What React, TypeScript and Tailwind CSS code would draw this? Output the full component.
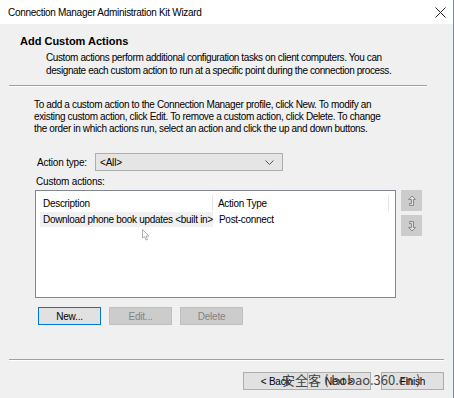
import React from "react";

const font = { fontFamily: '"Liberation Sans", Arial, "Noto Sans CJK SC", sans-serif' };

function Separator({ className }: { className: string }) {
  return (
    <div className={className}>
      <div className="h-px bg-[#a0a0a0]" />
      <div className="h-px bg-white" />
    </div>
  );
}

function ArrowButton({ up }: { up?: boolean }) {
  return (
    <div className="w-[21px] h-[21px] bg-[#cccccc] flex items-center justify-center">
      <svg width="10" height="12" viewBox="0 0 10 12" className={up ? "" : "-scale-y-100"}>
        <path
          d="M5 1 L8.5 4.5 L6.5 4.5 L6.5 10.5 L2.5 10.5 L2.5 8.5 L4.5 8.5 L4.5 4.5 L1.5 4.5 Z"
          fill="#e0e0e0"
          stroke="#8a8a8a"
          strokeWidth="1"
          strokeLinejoin="round"
        />
      </svg>
    </div>
  );
}

function Button({
  label,
  disabled,
  focused,
  className = "",
}: {
  label: string;
  disabled?: boolean;
  focused?: boolean;
  className?: string;
}) {
  return (
    <div
      className={`h-[18px] flex items-center justify-center text-[10px] tracking-[-0.2px] ${
        focused
          ? "border border-[#0078d7] bg-[#e1e1e1] text-black"
          : disabled
          ? "border border-[#bfbfbf] bg-[#cccccc] text-[#838383]"
          : "border border-[#adadad] bg-[#e1e1e1] text-black"
      } ${className}`}
    >
      {label}
    </div>
  );
}

export default function App() {
  return (
    <div
      className="relative w-[454px] h-[398px] bg-[#f0f0f0] border-r border-[#4a9ae0] overflow-hidden text-black whitespace-nowrap"
      style={font}
    >
      <div className="h-[24px] bg-white flex items-center justify-between pl-[8px] pr-[7px] text-[10px] tracking-[-0.3px]">
        <span>Connection Manager Administration Kit Wizard</span>
        <svg width="11" height="11" viewBox="0 0 11 11">
          <path d="M0.5 0.5 L10.5 10.5 M10.5 0.5 L0.5 10.5" stroke="#222" strokeWidth="1" />
        </svg>
      </div>

      <div className="h-[61px] pt-[10px] pl-[20px]">
        <div className="text-[11px] font-bold leading-[15px]">Add Custom Actions</div>
        <div className="pl-[26px] text-[10px] tracking-[-0.4px] leading-[13px] mt-[2px]">
          <div>Custom actions perform additional configuration tasks on client computers. You can</div>
          <div>designate each custom action to run at a specific point during the connection process.</div>
        </div>
      </div>

      <Separator className="ml-[9px] w-[418px]" />

      <div className="pl-[34px] pt-[12px] text-[10px] tracking-[-0.35px] leading-[12px]">
        <div>To add a custom action to the Connection Manager profile, click New. To modify an</div>
        <div>existing custom action, click Edit. To remove a custom action, click Delete. To change</div>
        <div>the order in which actions run, select an action and click the up and down buttons.</div>
      </div>

      <div className="flex items-center mt-[18px] pl-[37px] text-[10px] tracking-[-0.2px]">
        <span className="w-[58px]">Action type:</span>
        <div className="w-[188px] h-[18px] bg-[#e5e5e5] border border-[#adadad] flex items-center justify-between pl-[4px] pr-[8px]">
          <span>&lt;All&gt;</span>
          <svg width="9" height="5" viewBox="0 0 9 5">
            <path d="M0.5 0.5 L4.5 4.5 L8.5 0.5" fill="none" stroke="#555" strokeWidth="1" />
          </svg>
        </div>
      </div>

      <div className="pl-[36px] mt-[4px] text-[10px] tracking-[-0.2px] leading-[13px]">Custom actions:</div>

      <div className="flex mt-[2px] pl-[35px]">
        <div className="w-[361px] h-[108px] bg-white border border-[#828790] text-[10px] tracking-[-0.3px] pt-[4px] pl-[4px]">
          <div className="flex h-[16px] w-[349px] border-r border-[#e5e5e5]">
            <div className="w-[173px] border-r border-[#e5e5e5] pl-[3px] flex items-center">Description</div>
            <div className="pl-[5px] flex items-center">Action Type</div>
          </div>
          <div className="flex h-[15px] mt-[1px]">
            <div className="w-[173px] bg-[#f0f0f0] pl-[3px] flex items-center">
              Download phone book updates &lt;built in&gt;
            </div>
            <div className="pl-[6px] flex items-center">Post-connect</div>
          </div>
        </div>
        <div className="ml-[5px] flex flex-col gap-[4px]">
          <ArrowButton up />
          <ArrowButton />
        </div>
      </div>

      <div className="flex gap-[8px] mt-[9px] pl-[38px]">
        <Button label="New..." focused className="w-[63px]" />
        <Button label="Edit..." disabled className="w-[63px]" />
        <Button label="Delete" disabled className="w-[63px]" />
      </div>

      <Separator className="mt-[34px] ml-[9px] w-[435px]" />

      <div className="flex justify-end mt-[11px] pr-[9px]">
        <Button label="< Back" className="w-[64px] border-r-0" />
        <Button label="Next >" className="w-[64px]" />
        <Button label="Finish" className="w-[63px] ml-[10px]" />
      </div>

      <div
        className="absolute left-[282px] top-[371px] text-[13px] leading-[18px] text-[#444]"
        style={{ fontFamily: '"Noto Sans CJK SC", "DejaVu Sans", sans-serif' }}
      >
        安全客 ( bobao.360.cn )
      </div>

      <svg className="absolute left-[142px] top-[229px]" width="8" height="12" viewBox="0 0 8 12">
        <path d="M0.5 0.5 L0.5 9 L2.5 7.5 L4 11 L5.5 10.5 L4 7 L7 7 Z" fill="white" stroke="#999" strokeWidth="0.8" />
      </svg>
    </div>
  );
}
